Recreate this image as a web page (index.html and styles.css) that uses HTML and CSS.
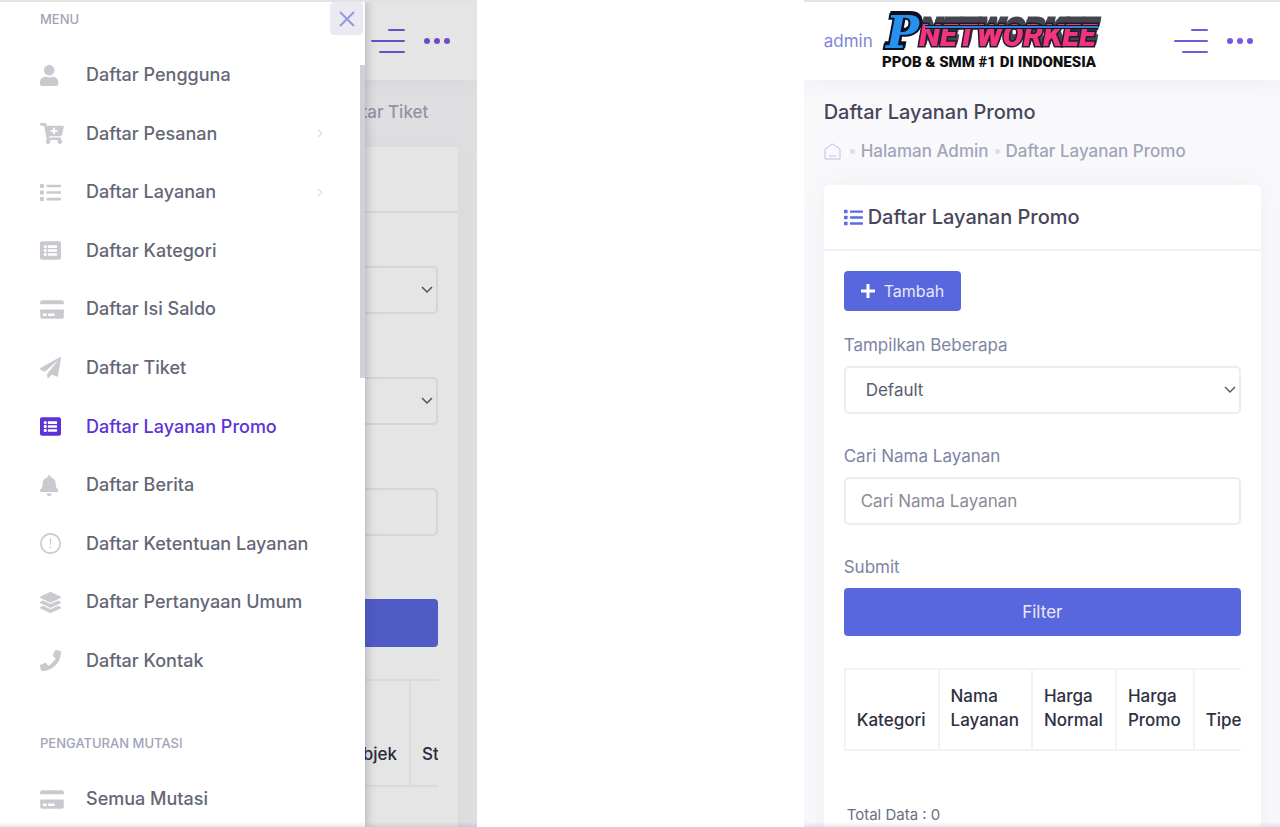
FILE: index.html
```html
<!DOCTYPE html>
<html lang="id">
<head>
  <meta charset="UTF-8" />
  <meta name="viewport" content="width=device-width, initial-scale=1.0"/>
  <title>Daftar Layanan Promo</title>
  <link rel="stylesheet" href="styles.css">
</head>
<body>
  <!-- icon set -->
  <svg class="sprite" aria-hidden="true">
    <symbol id="i-user" viewBox="0 0 448 512" preserveAspectRatio="xMinYMid"><path d="M224 256c70.700 0 128-57.300 128-128S294.700 0 224 0 96 57.300 96 128s57.300 128 128 128zm89.600 32h-16.700c-22.200 10.200-46.900 16-72.900 16s-50.600-5.800-72.900-16h-16.700C60.200 288 0 348.200 0 422.400V464c0 26.500 21.500 48 48 48h352c26.500 0 48-21.500 48-48v-41.600c0-74.200-60.200-134.400-134.400-134.400z"/></symbol>
    <symbol id="i-cart" viewBox="0 0 576 512"><path d="M504.717 320H211.572l6.545 32h268.418c15.401 0 26.816 14.301 23.403 29.319l-5.517 24.276C523.112 414.668 536 433.828 536 456c0 31.202-25.519 56.444-56.824 55.994-29.823-.429-54.350-24.631-55.155-54.447-.44-16.287 6.085-31.049 16.803-41.548H231.176C241.553 426.165 248 440.326 248 456c0 31.813-26.528 57.431-58.670 55.938-28.540-1.325-51.751-24.385-53.251-52.917-1.158-22.034 10.436-41.455 28.051-51.586L93.883 64H24C10.745 64 0 53.255 0 40V24C0 10.745 10.745 0 24 0h102.529c11.401 0 21.228 8.021 23.513 19.190L159.208 64H551.990c15.401 0 26.816 14.301 23.403 29.319l-47.273 208C525.637 312.246 515.923 320 504.717 320zM408 168h-48v-40c0-8.837-7.163-16-16-16h-16c-8.837 0-16 7.163-16 16v40h-48c-8.837 0-16 7.163-16 16v16c0 8.837 7.163 16 16 16h48v40c0 8.837 7.163 16 16 16h16c8.837 0 16-7.163 16-16v-40h48c8.837 0 16-7.163 16-16v-16c0-8.837-7.163-16-16-16z"/></symbol>
    <symbol id="i-list" viewBox="0 0 512 512"><rect y="48" width="96" height="96" rx="16"/><rect y="208" width="96" height="96" rx="16"/><rect y="368" width="96" height="96" rx="16"/><rect x="160" y="64" width="352" height="64" rx="16"/><rect x="160" y="224" width="352" height="64" rx="16"/><rect x="160" y="384" width="352" height="64" rx="16"/></symbol>
    <symbol id="i-list-alt" viewBox="0 0 512 512"><path fill-rule="evenodd" d="M48 32h416c26 0 48 22 48 48v352c0 26-22 48-48 48H48c-26 0-48-22-48-48V80c0-26 22-48 48-48zM128 120a40 40 0 1 0 0 80 40 40 0 0 0 0-80zm0 96a40 40 0 1 0 0 80 40 40 0 0 0 0-80zm0 96a40 40 0 1 0 0 80 40 40 0 0 0 0-80zM204 128h200q12 0 12 12v40q0 12-12 12H204q-12 0-12-12v-40q0-12 12-12zm0 96h200q12 0 12 12v40q0 12-12 12H204q-12 0-12-12v-40q0-12 12-12zm0 96h200q12 0 12 12v40q0 12-12 12H204q-12 0-12-12v-40q0-12 12-12z"/></symbol>
    <symbol id="i-card" viewBox="0 0 576 512"><path fill-rule="evenodd" d="M0 432c0 26 22 48 48 48h480c26 0 48-22 48-48V256H0zm192-68q0-12 12-12h136q12 0 12 12v40q0 12-12 12H204q-12 0-12-12zm-128 0q0-12 12-12h72q12 0 12 12v40q0 12-12 12H76q-12 0-12-12zM576 80v48H0V80c0-26 22-48 48-48h480c26 0 48 22 48 48z"/></symbol>
    <symbol id="i-plane" viewBox="0 0 512 512"><path d="M476 3.200L12.500 270.600c-18.100 10.400-15.800 35.600 2.200 43.200L121 358.400l287.300-253.200c5.500-4.900 13.300 2.600 8.600 8.300L176 407v80.500c0 23.600 28.500 32.900 42.500 15.800L282 426l124.600 52.200c14.200 6 30.400-2.900 33-18.200l72-432C515 7.800 493.300-6.800 476 3.200z"/></symbol>
    <symbol id="i-bell" viewBox="0 0 448 512" preserveAspectRatio="xMinYMid"><path d="M224 512c35.320 0 63.970-28.650 63.970-64H160.030c0 35.350 28.650 64 63.970 64zm215.390-149.710c-19.320-20.760-55.470-51.990-55.470-154.290 0-77.700-54.480-139.900-127.940-155.160V32c0-17.670-14.320-32-31.980-32s-31.980 14.330-31.980 32v20.840C118.560 68.100 64.080 130.300 64.080 208c0 102.300-36.150 133.530-55.470 154.290-6 6.450-8.660 14.160-8.610 21.710.11 16.400 12.980 32 32.100 32h383.800c19.120 0 32-15.600 32.100-32 .05-7.550-2.610-15.270-8.610-21.710z"/></symbol>
    <symbol id="i-info" viewBox="0 0 512 512"><circle cx="256" cy="256" r="236" fill="none" stroke="currentColor" stroke-width="40"/><path d="M240 136h32l-5 150h-22z"/><circle cx="256" cy="350" r="22"/></symbol>
    <symbol id="i-layers" viewBox="0 0 512 512"><path d="M12.410 148.020l232.940 105.670c6.800 3.090 14.490 3.090 21.290 0l232.940-105.670c16.550-7.510 16.550-32.520 0-40.030L266.650 2.310a25.607 25.607 0 0 0-21.290 0L12.410 107.980c-16.550 7.510-16.550 32.530 0 40.040zm487.180 88.280l-58.090-26.330-161.640 73.270c-7.560 3.430-15.590 5.170-23.860 5.170s-16.290-1.740-23.860-5.170L70.510 209.970l-58.100 26.330c-16.550 7.500-16.550 32.500 0 40l232.940 105.590c6.800 3.080 14.490 3.080 21.290 0L499.590 276.300c16.550-7.500 16.550-32.500 0-40zm0 127.800l-57.870-26.230-161.860 73.370c-7.560 3.430-15.590 5.170-23.860 5.170s-16.290-1.740-23.860-5.170L70.290 337.870 12.410 364.100c-16.550 7.500-16.550 32.500 0 40l232.940 105.590c6.800 3.080 14.490 3.080 21.290 0L499.590 404.100c16.550-7.500 16.550-32.500 0-40z"/></symbol>
    <symbol id="i-phone" viewBox="0 0 512 512"><path d="M493.400 24.600l-104-24c-11.300-2.600-22.900 3.300-27.500 13.900l-48 112c-4.200 9.800-1.400 21.300 6.900 28l60.600 49.600c-36 76.700-98.900 140.500-177.200 177.200l-49.600-60.600c-6.800-8.300-18.200-11.100-28-6.900l-112 48C3.900 366.500-2 378.100.6 389.400l24 104C27.100 504.200 36.700 512 48 512c256.100 0 464-207.500 464-464 0-11.200-7.700-20.900-18.600-23.400z"/></symbol>
    <symbol id="i-chevron" viewBox="0 0 6 9"><path d="M1 1l4 3.500L1 8" fill="none" stroke="currentColor"/></symbol>
    <symbol id="i-burger" viewBox="0 0 34 26"><path d="M18 2h15M1 13h32M9 24h24" fill="none" stroke="currentColor" stroke-width="2" stroke-linecap="round"/></symbol>
    <symbol id="i-dots" viewBox="0 0 26 8"><circle cx="3" cy="4" r="3"/><circle cx="13" cy="4" r="3"/><circle cx="23" cy="4" r="3"/></symbol>
  </svg>

  <main class="screens">
    <section class="phone">
      <header class="topbar">
        <div class="tools">
          <button type="button" class="tool" aria-label="Menu"><svg class="burger"><use href="#i-burger"/></svg></button>
          <button type="button" class="tool" aria-label="Lainnya"><svg class="dots"><use href="#i-dots"/></svg></button>
        </div>
      </header>
      <div class="content">
        <div class="subheader subheader-end">
          <nav class="crumbs"><a href="#">Halaman Admin</a><i></i><a href="#">Daftar Tiket</a></nav>
        </div>
        <div class="card">
          <div class="card-head"></div>
          <form class="card-body">
            <div class="group">
              <label for="limit">&nbsp;</label>
              <select id="limit" class="field"><option></option></select>
            </div>
            <div class="group">
              <label for="status">&nbsp;</label>
              <select id="status" class="field"><option></option></select>
            </div>
            <div class="group">
              <label for="cari">&nbsp;</label>
              <input id="cari" class="field" type="text">
            </div>
            <div class="group">
              <label for="kirim">&nbsp;</label>
              <button id="kirim" type="button" class="btn btn-block"></button>
            </div>
            <div class="table-wrap">
              <table class="tickets">
                <thead><tr><th></th><th class="subject">Subjek</th><th>Status</th></tr></thead>
              </table>
            </div>
          </form>
        </div>
      </div>
      <div class="overlay"></div>

      <aside class="drawer">
        <button type="button" class="close" aria-label="Tutup">
          <svg viewBox="0 0 16 16"><path d="M1 1l14 14M15 1L1 15"/></svg>
        </button>
        <h4>MENU</h4>
        <ul class="menu">
          <li><a href="#"><svg><use href="#i-user"/></svg>Daftar Pengguna</a></li>
          <li><a href="#"><svg class="wide"><use href="#i-cart"/></svg>Daftar Pesanan<svg class="arrow"><use href="#i-chevron"/></svg></a></li>
          <li><a href="#"><svg><use href="#i-list"/></svg>Daftar Layanan<svg class="arrow"><use href="#i-chevron"/></svg></a></li>
          <li><a href="#"><svg><use href="#i-list-alt"/></svg>Daftar Kategori</a></li>
          <li><a href="#"><svg class="wide"><use href="#i-card"/></svg>Daftar Isi Saldo</a></li>
          <li><a href="#"><svg><use href="#i-plane"/></svg>Daftar Tiket</a></li>
          <li><a href="#" class="active"><svg><use href="#i-list-alt"/></svg>Daftar Layanan Promo</a></li>
          <li><a href="#"><svg><use href="#i-bell"/></svg>Daftar Berita</a></li>
          <li><a href="#"><svg><use href="#i-info"/></svg>Daftar Ketentuan Layanan</a></li>
          <li><a href="#"><svg><use href="#i-layers"/></svg>Daftar Pertanyaan Umum</a></li>
          <li><a href="#"><svg><use href="#i-phone"/></svg>Daftar Kontak</a></li>
        </ul>
        <h4 class="next">PENGATURAN MUTASI</h4>
        <ul class="menu menu-short">
          <li><a href="#"><svg class="wide"><use href="#i-card"/></svg>Semua Mutasi</a></li>
        </ul>
        <span class="scrollbar"></span>
      </aside>
    </section>

    <section class="phone">
      <header class="topbar">
        <a href="#" class="brand">
          <span>admin</span>
          <svg class="logo" viewBox="0 0 220 60" role="img" aria-label="PNETWORKEE">
            <text class="word" x="38" y="35">NETWORKEE</text>
            <path d="M44 16H217" stroke="#10182c" stroke-width="4"/>
            <path d="M44 16H217" stroke="#2a86c8" stroke-width="2"/>
            <text class="letter" x="5" y="37">P</text>
            <text class="tagline" x="1" y="56">PPOB &amp; SMM #1 DI INDONESIA</text>
          </svg>
        </a>
        <div class="tools">
          <button type="button" class="tool" aria-label="Menu"><svg class="burger"><use href="#i-burger"/></svg></button>
          <button type="button" class="tool" aria-label="Lainnya"><svg class="dots"><use href="#i-dots"/></svg></button>
        </div>
      </header>
      <div class="content">
        <div class="subheader">
          <h1>Daftar Layanan Promo</h1>
          <nav class="crumbs">
            <a href="#" aria-label="Beranda"><svg class="home" viewBox="0 0 17 17"><path d="M1 16V6l7.500-5L16 6v10zM5 13h7"/></svg></a>
            <i></i><a href="#">Halaman Admin</a><i></i><a href="#">Daftar Layanan Promo</a>
          </nav>
        </div>
        <div class="card">
          <div class="card-head">
            <svg><use href="#i-list"/></svg>
            <h2>Daftar Layanan Promo</h2>
          </div>
          <form class="card-body">
            <button type="button" class="btn btn-add">
              <svg viewBox="0 0 14 14"><path d="M7 0v14M0 7h14"/></svg>Tambah
            </button>
            <div class="group">
              <label for="tampil">Tampilkan Beberapa</label>
              <select id="tampil" class="field"><option>Default</option></select>
            </div>
            <div class="group">
              <label for="nama">Cari Nama Layanan</label>
              <input id="nama" class="field" type="text" placeholder="Cari Nama Layanan">
            </div>
            <div class="group">
              <label for="filter">Submit</label>
              <button id="filter" type="button" class="btn btn-block">Filter</button>
            </div>
            <div class="table-wrap">
              <table class="services">
                <thead>
                  <tr><th>Kategori</th><th>Nama<br>Layanan</th><th>Harga<br>Normal</th><th>Harga<br>Promo</th><th>Tipe</th></tr>
                </thead>
              </table>
            </div>
            <p class="total">Total Data : 0</p>
          </form>
        </div>
      </div>
    </section>
  </main>
</body>
</html>
```
FILE: styles.css
```css
* { box-sizing: border-box; }
body { margin: 0; background: #fff; font-family: Inter, "Open Sans", sans-serif; font-size: 17px; line-height: 24px; color: #595d6e; }
h1, h2, h4, p, ul { margin: 0; padding: 0; }
a { text-decoration: none; color: inherit; }
svg { fill: currentColor; flex: none; }
button, input, select { font: inherit; }
button { border: 0; padding: 0; cursor: pointer; }
.sprite { position: absolute; width: 0; height: 0; }

.screens { display: grid; grid-template-columns: 477fr 476fr; column-gap: 25.5%; height: 100vh; }
.phone { position: relative; overflow: hidden; min-width: 0; background: #f9f9fc; border-top: 2px solid #e2e2e2; }
.phone::after { content: ""; position: absolute; left: 0; right: 0; bottom: 0; height: 5px; background: linear-gradient(transparent, rgba(60, 60, 90, 0.12)); }

/* top bar */
.topbar { display: flex; align-items: center; height: 78px; padding: 0 27px 0 20px; background: #fff; box-shadow: 0 4px 24px rgba(82, 63, 105, 0.06); position: relative; }
.brand { display: flex; align-items: center; gap: 8px; color: #7f85d8; }
.logo { width: 220px; height: 60px; overflow: visible; }
.word { font-family: Roboto, sans-serif; font-weight: 900; font-style: italic; font-size: 31px; paint-order: stroke; stroke-width: 3px; fill: #f2347c; stroke: #221a2c; filter: drop-shadow(1px -3px 0 #44444f) drop-shadow(1px -3px 0 #44444f); }
.letter { font-family: "DejaVu Serif", serif; font-weight: bold; font-style: italic; font-size: 44px; paint-order: stroke; stroke-width: 4px; stroke: #0d1020; fill: #2492ee; filter: drop-shadow(1px -2px 0 #0d1020); }
.tagline { font-family: Roboto, sans-serif; font-weight: 900; font-size: 15px; fill: #111; }
.tools { display: flex; align-items: center; gap: 19px; margin-left: auto; color: #7a56dc; }
.tool { display: flex; background: none; color: inherit; }
.burger { width: 34px; height: 26px; }
.dots { width: 26px; height: 8px; }

/* sub header */
.content { padding: 20px 19px 0 20px; }
.subheader { padding-bottom: 22px; }
.subheader-end { display: flex; justify-content: flex-end; padding: 0 30px 23px 0; }
h1 { font-size: 20px; line-height: 24px; font-weight: 500; color: #48465b; margin-bottom: 15px; }
.crumbs { display: flex; align-items: center; font-weight: 500; color: #a2a5b9; }
.crumbs i { width: 5px; height: 5px; border-radius: 50%; background: #dcdce6; margin: 0 6px; }
.home { display: block; width: 17px; height: 17px; margin-right: 3px; fill: none; stroke: #c3bfea; }

/* card */
.card { background: #fff; border-radius: 5px; box-shadow: 0 0 26px rgba(82, 63, 105, 0.06); height: 800px; }
.card-head { display: flex; align-items: center; gap: 5px; height: 66px; padding: 0 20px; border-bottom: 2px solid #f1f1f5; }
.card-head svg { width: 19px; height: 19px; color: #5d6be0; }
h2 { font-size: 20px; line-height: 24px; font-weight: 500; color: #48465b; }
.card-body { padding: 20px; }
.group { display: flex; flex-direction: column; gap: 9px; margin-bottom: 30px; }
.group label { color: #7d84a3; }
.field { width: 100%; height: 48px; border: 2px solid #ececf3; border-radius: 5px; background: #fff; padding: 0 15px; color: #595d6e; outline: none; }
.field::placeholder { color: #8a8b97; opacity: 1; }
select.field { appearance: none; padding-left: 20px; background: #fff url("data:image/svg+xml,%3Csvg xmlns='http://www.w3.org/2000/svg' width='12' height='8'%3E%3Cpath d='M1 1l5 5 5-5' fill='none' stroke='%23595d6e' stroke-width='1.500'/%3E%3C/svg%3E") no-repeat right 3px center; }
.btn { background: #5867dd; color: #e9e9f7; border-radius: 4px; }
.btn-block { width: 100%; height: 48px; }
.btn-add { display: flex; align-items: center; gap: 9px; height: 40px; padding: 0 17px; margin-bottom: 22px; font-size: 16px; }
.btn-add svg { width: 14px; height: 14px; stroke: #fff; stroke-width: 3; }

/* table */
.table-wrap { overflow: hidden; margin-top: 32px; }
table { border-collapse: collapse; white-space: nowrap; }
th { border: 2px solid #f3f3f6; padding: 14px 12px 17px 11px; text-align: left; vertical-align: bottom; line-height: 24px; font-weight: 500; color: #2f3044; }
.services { width: 110%; }
.services th:last-child { width: 100%; }
.tickets { table-layout: fixed; width: 500px; }
.tickets th { height: 106px; padding-bottom: 19px; }
.tickets th:first-child { width: 269px; }
.tickets .subject { width: 100px; text-align: right; }
.total { margin: 52px 0 0 3px; font-size: 15px; color: #6c6f80; }

/* drawer */
.overlay { position: absolute; inset: 0; background: rgba(0, 0, 0, 0.1); }
.drawer { position: absolute; top: 0; bottom: 0; left: 0; width: 365px; padding: 8px 40px 0; background: #fff; box-shadow: 1px 0 9px 1px rgba(45, 47, 80, 0.25); overflow: hidden; }
.close { position: absolute; top: 0; right: 2px; width: 33px; height: 33px; border-radius: 4px; background: #ebe9f2; display: flex; align-items: center; justify-content: center; }
.close svg { width: 16px; height: 16px; stroke: #959ae0; stroke-width: 2; }
.drawer h4 { font-size: 13px; line-height: 18px; font-weight: 500; color: #a1a3b8; margin-bottom: 18px; }
.drawer .next { margin-top: 44px; }
/* eleven equal rows */
.menu { display: grid; grid-auto-rows: 1fr; height: 644px; list-style: none; }
.menu-short { height: 58px; }
.menu a { display: flex; align-items: center; height: 100%; font-size: 18px; font-weight: 500; color: #646777; }
.menu svg { width: 21px; height: 21px; margin-right: 25px; color: #c9c9d0; }
.menu svg.wide { width: 24px; margin-right: 22px; }
.menu svg.arrow { width: 6px; height: 9px; margin: 0 2px 0 auto; }
.menu a.active, .menu a.active svg { color: #5d32d6; }
.scrollbar { position: absolute; right: 0; top: 63px; width: 5px; height: 313px; background: #d0d0d6; }
```
